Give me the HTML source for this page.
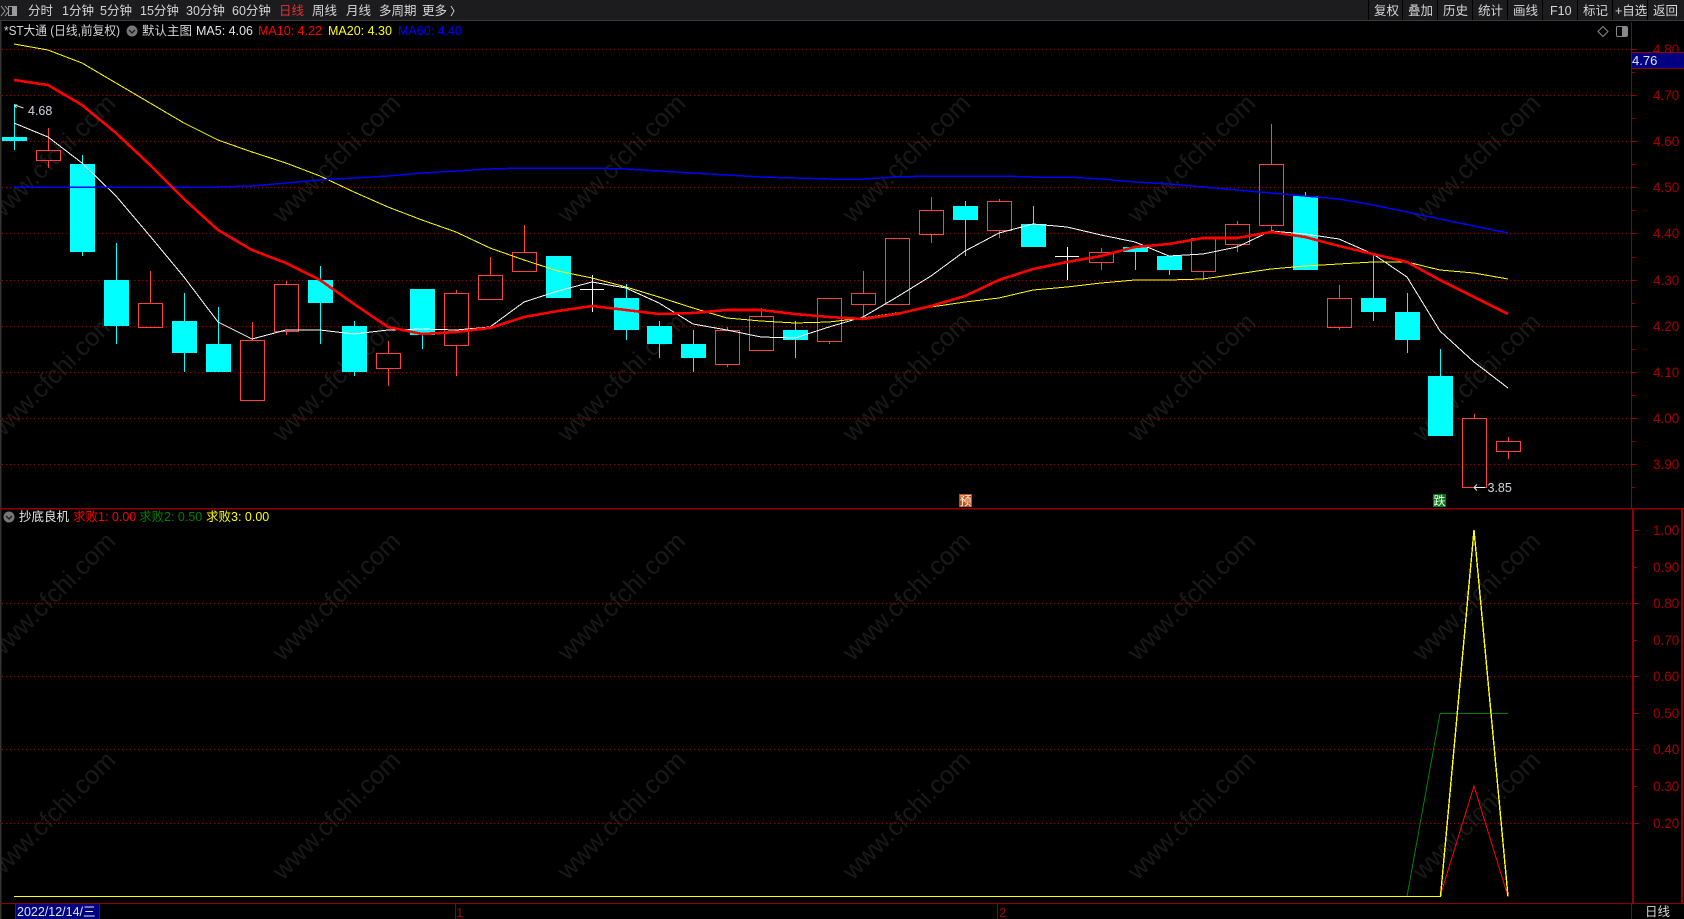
<!DOCTYPE html>
<html><head><meta charset="utf-8"><style>
html,body{margin:0;padding:0;background:#000;width:1684px;height:919px;overflow:hidden}
svg{display:block;position:absolute;left:0;top:0}
text{font-family:"Liberation Sans","Noto Sans CJK SC",sans-serif;font-size:12.5px}
.m{fill:#d6d6d6;font-size:12.5px}
.a{fill:#a80000;font-size:13.5px}
.w{fill:#191919;font-size:25.5px}
</style></head><body>
<svg width="1684" height="919" viewBox="0 0 1684 919" xmlns="http://www.w3.org/2000/svg">
<rect width="1684" height="919" fill="#000"/>
<!-- watermark -->
<g text-anchor="middle">
<text class="w" transform="translate(51,158) rotate(-45)" y="9">www.cfchi.com</text><text class="w" transform="translate(336,158) rotate(-45)" y="9">www.cfchi.com</text><text class="w" transform="translate(621,158) rotate(-45)" y="9">www.cfchi.com</text><text class="w" transform="translate(906,158) rotate(-45)" y="9">www.cfchi.com</text><text class="w" transform="translate(1191,158) rotate(-45)" y="9">www.cfchi.com</text><text class="w" transform="translate(1476,158) rotate(-45)" y="9">www.cfchi.com</text>
<text class="w" transform="translate(51,377) rotate(-45)" y="9">www.cfchi.com</text><text class="w" transform="translate(336,377) rotate(-45)" y="9">www.cfchi.com</text><text class="w" transform="translate(621,377) rotate(-45)" y="9">www.cfchi.com</text><text class="w" transform="translate(906,377) rotate(-45)" y="9">www.cfchi.com</text><text class="w" transform="translate(1191,377) rotate(-45)" y="9">www.cfchi.com</text><text class="w" transform="translate(1476,377) rotate(-45)" y="9">www.cfchi.com</text>
<text class="w" transform="translate(51,596) rotate(-45)" y="9">www.cfchi.com</text><text class="w" transform="translate(336,596) rotate(-45)" y="9">www.cfchi.com</text><text class="w" transform="translate(621,596) rotate(-45)" y="9">www.cfchi.com</text><text class="w" transform="translate(906,596) rotate(-45)" y="9">www.cfchi.com</text><text class="w" transform="translate(1191,596) rotate(-45)" y="9">www.cfchi.com</text><text class="w" transform="translate(1476,596) rotate(-45)" y="9">www.cfchi.com</text>
<text class="w" transform="translate(51,815) rotate(-45)" y="9">www.cfchi.com</text><text class="w" transform="translate(336,815) rotate(-45)" y="9">www.cfchi.com</text><text class="w" transform="translate(621,815) rotate(-45)" y="9">www.cfchi.com</text><text class="w" transform="translate(906,815) rotate(-45)" y="9">www.cfchi.com</text><text class="w" transform="translate(1191,815) rotate(-45)" y="9">www.cfchi.com</text><text class="w" transform="translate(1476,815) rotate(-45)" y="9">www.cfchi.com</text>
</g>
<!-- top bar -->
<rect x="0" y="0" width="1684" height="20" fill="#1c1c1f"/>
<rect x="0" y="20" width="1684" height="1" fill="#3a3a3a"/>
<rect x="0" y="21" width="1684" height="1" fill="#000"/>
<g fill="#000"><rect x="1368" y="0" width="1" height="20"/><rect x="1402" y="0" width="1" height="20"/><rect x="1437" y="0" width="1" height="20"/><rect x="1472" y="0" width="1" height="20"/><rect x="1507" y="0" width="1" height="20"/><rect x="1542" y="0" width="1" height="20"/><rect x="1577" y="0" width="1" height="20"/><rect x="1612" y="0" width="1" height="20"/><rect x="1647" y="0" width="1" height="20"/></g>
<rect x="0" y="21" width="1.5" height="898" fill="#333"/>
<!-- top-left icon -->
<path d="M1 6l4 5-4 5M5 6l4 5-4 5" fill="none" stroke="#9a9a9a" stroke-width="1"/>
<rect x="8.5" y="6.5" width="8" height="9" fill="none" stroke="#9a9a9a"/><rect x="12" y="7" width="4" height="8" fill="#9a9a9a"/>
<!-- menu -->
<g class="m">
<text class="m" x="28" y="15">分时</text><text class="m" x="62" y="15">1分钟</text><text class="m" x="100" y="15">5分钟</text><text class="m" x="140" y="15">15分钟</text><text class="m" x="186" y="15">30分钟</text><text class="m" x="232" y="15">60分钟</text>
<text class="m" x="279" y="15" style="fill:#e83030">日线</text>
<text class="m" x="312" y="15">周线</text><text class="m" x="346" y="15">月线</text><text class="m" x="379" y="15">多周期</text><text class="m" x="422" y="15">更多</text>
<path d="M451 6l3 5-3 5" fill="none" stroke="#c8c8c8"/>
<text class="m" x="1374" y="15">复权</text><text class="m" x="1408" y="15">叠加</text><text class="m" x="1443" y="15">历史</text><text class="m" x="1478" y="15">统计</text><text class="m" x="1513" y="15">画线</text><text class="m" x="1550" y="15">F10</text><text class="m" x="1583" y="15">标记</text><text class="m" x="1615" y="15">+自选</text><text class="m" x="1653" y="15">返回</text>
</g>
<!-- title row -->
<text class="m" x="4" y="35" textLength="116" lengthAdjust="spacingAndGlyphs">*ST大通 (日线,前复权)</text>
<circle cx="132" cy="31" r="5.5" fill="#777"/><path d="M129 30l3 3 3-3" fill="none" stroke="#1a1a1a" stroke-width="1.3"/>
<text class="m" x="142" y="35">默认主图</text>
<text x="196" y="35" fill="#e4e4e4">MA5: 4.06</text>
<text x="258" y="35" fill="#ff0000">MA10: 4.22</text>
<text x="328" y="35" fill="#ffff00">MA20: 4.30</text>
<text x="398" y="35" fill="#0000ff">MA60: 4.40</text>
<path d="M1603 26.5l5 5-5 5-5-5z" fill="none" stroke="#888"/>
<rect x="1616.5" y="26.5" width="11" height="10" rx="1.5" fill="none" stroke="#888"/><rect x="1622" y="27" width="5" height="9" fill="#888"/>
<!-- grid dotted -->
<g stroke="#a00000" stroke-dasharray="1 3" stroke-width="1" shape-rendering="crispEdges">
<path d="M2 49.5H1631M2 95.5H1631M2 141.5H1631M2 187.5H1631M2 233.5H1631M2 280.5H1631M2 326.5H1631M2 372.5H1631M2 418.5H1631M2 464.5H1631"/>
<path d="M2 603.5H1631M2 676.5H1631M2 749.5H1631M2 823.5H1631"/>
</g>
<!-- candles -->
<g shape-rendering="crispEdges">
<!-- hollow red -->
<g fill="none" stroke="#ff4040" stroke-width="1">
<rect x="36.5" y="150.5" width="24" height="10"/><rect x="138.5" y="303.5" width="24" height="24"/><rect x="240.5" y="340.5" width="24" height="60"/><rect x="274.5" y="284.5" width="24" height="47"/><rect x="376.5" y="353.5" width="24" height="15"/><rect x="444.5" y="293.5" width="24" height="52"/><rect x="478.5" y="275.5" width="24" height="24"/><rect x="512.5" y="252.5" width="24" height="19"/><rect x="715.5" y="330.5" width="24" height="34"/><rect x="749.5" y="316.5" width="24" height="34"/><rect x="817.5" y="298.5" width="24" height="43"/><rect x="851.5" y="293.5" width="24" height="11"/><rect x="885.5" y="238.5" width="24" height="66"/><rect x="919.5" y="210.5" width="24" height="24"/><rect x="987.5" y="201.5" width="24" height="29"/><rect x="1089.5" y="252.5" width="24" height="10"/><rect x="1191.5" y="238.5" width="24" height="33"/><rect x="1225.5" y="224.5" width="24" height="20"/><rect x="1259.5" y="164.5" width="24" height="61"/><rect x="1327.5" y="298.5" width="24" height="29"/><rect x="1462.5" y="418.5" width="24" height="69"/><rect x="1496.5" y="441.5" width="24" height="10"/>
<path d="M48.5 128V150M48.5 161V168M150.5 271V303M252.5 322V340M286.5 281V284M286.5 332V335M388.5 341V353M388.5 369V386M456.5 290V293M456.5 346V376M490.5 257V275M524.5 225V252M727.5 327V330M727.5 365V367M761.5 308V316M829.5 342V344M863.5 271V293M863.5 305V317M931.5 197V210M931.5 235V243M999.5 199V201M999.5 231V238M1101.5 248V252M1101.5 263V270M1203.5 272V280M1237.5 221V224M1237.5 245V252M1271.5 124V164M1271.5 226V233M1339.5 285V298M1339.5 328V330M1474.5 414V418M1508.5 437V441M1508.5 452V459"/>
</g>
<!-- cyan -->
<g stroke="#00ffff" stroke-width="1">
<path d="M14.5 104V150M82.5 155V256M116.5 243V344M184.5 293V372M218.5 307V344M320.5 266V344M354.5 321V376M422.5 335V349M626.5 284V340M659.5 321V358M693.5 330V372M795.5 321V358M965.5 201V256M1033.5 206V224M1135.5 252V270M1169.5 270V275M1305.5 192V196M1373.5 253V321M1407.5 293V353M1440.5 349V376"/>
</g>
<g fill="#00ffff">
<rect x="2" y="137" width="25" height="4"/><rect x="70" y="164" width="25" height="88"/><rect x="104" y="280" width="25" height="46"/><rect x="172" y="321" width="25" height="32"/><rect x="206" y="344" width="25" height="28"/><rect x="308" y="280" width="25" height="23"/><rect x="342" y="326" width="25" height="46"/><rect x="410" y="289" width="25" height="46"/><rect x="546" y="256" width="25" height="42"/><rect x="614" y="298" width="25" height="32"/><rect x="647" y="326" width="25" height="18"/><rect x="681" y="344" width="25" height="14"/><rect x="783" y="330" width="25" height="10"/><rect x="953" y="206" width="25" height="14"/><rect x="1021" y="224" width="25" height="23"/><rect x="1123" y="247" width="25" height="5"/><rect x="1157" y="256" width="25" height="14"/><rect x="1293" y="196" width="25" height="74"/><rect x="1361" y="298" width="25" height="14"/><rect x="1395" y="312" width="25" height="28"/><rect x="1428" y="376" width="25" height="60"/>
</g>
<!-- white doji -->
<path d="M580 289.5H604M592.5 275V312M1055 256.5H1079M1067.5 247V280" stroke="#fff" stroke-width="1" fill="none"/>
</g>
<!-- MA lines -->
<g fill="none" stroke-linejoin="round" shape-rendering="crispEdges">
<polyline stroke="#ffffff" stroke-width="1" points="14,123 48,137 82,163 116,196 150,236 184,277 218,322 252,339 286,330 320,330 354,334 388,330 422,329 456,330 490,327 524,302 558,291 592,282 626,288 659,303 693,324 727,330 761,337 795,338 829,327 863,317 897,297 931,276 965,251 999,233 1033,224 1067,227 1101,235 1135,242 1169,256 1203,254 1237,247 1271,231 1305,234 1339,239 1373,254 1407,277 1440,331 1474,362 1508,388"/>
<polyline stroke="#ffff00" stroke-width="1" points="14,44 48,50 82,63 116,83 150,103 184,123 218,140 252,152 286,163 320,176 354,192 388,207 422,220 456,232 490,248 524,260 558,271 592,278 626,287 659,297 693,308 727,318 761,321 795,323 829,322 863,318 897,313 931,307 965,302 999,298 1033,290 1067,287 1101,283 1135,280 1169,280 1203,279 1237,274 1271,269 1305,266 1339,264 1373,262 1407,262 1440,270 1474,273 1508,279"/>
<polyline stroke="#0000ff" stroke-width="1.5" points="14,187 218,187 252,186 286,183 320,180 354,178 388,176 422,173 456,171 490,169 524,168 558,168 592,168 626,169 659,171 693,173 727,175 761,177 795,178 829,179 863,179 897,177 931,176 965,176 999,176 1033,177 1067,177 1101,179 1135,182 1169,184 1203,187 1237,190 1271,193 1305,196 1339,199 1373,205 1407,212 1440,219 1474,226 1508,233"/>
<polyline stroke="#ff0000" stroke-width="2.6" points="14,80 48,85 82,105 116,133 150,165 184,199 218,230 252,250 286,263 320,280 354,304 388,327 422,334 456,332 490,328 524,317 558,311 592,306 626,310 659,314 693,313 727,310 761,310 795,314 829,317 863,319 897,314 931,306 965,296 999,280 1033,269 1067,262 1101,256 1135,247 1169,244 1203,238 1237,238 1271,232 1305,237 1339,246 1373,254 1407,262 1440,280 1474,297 1508,314"/>
</g>
<!-- price labels -->
<path d="M14.5 105l9 3M14.5 105l3 0M14.5 105l2 3" stroke="#ddd" fill="none"/>
<text x="28" y="115" fill="#d0d8e0" font-size="12.5">4.68</text>
<path d="M1474 487.5h11M1474 487.5l3-3M1474 487.5l3 3" stroke="#eee" fill="none"/>
<text x="1487.5" y="492" fill="#d0d8e0">3.85</text>
<!-- markers -->
<rect x="959" y="494" width="13" height="13" fill="#c04a10"/><text x="959.5" y="505" fill="#fff" font-size="12" style="font-size:12px">预</text>
<rect x="1433" y="494" width="13" height="13" fill="#007a10"/><text x="1433.5" y="505" fill="#fff" style="font-size:12px">跌</text>
<!-- axes -->
<g shape-rendering="crispEdges">
<rect x="0" y="508" width="1684" height="1.5" fill="#900000"/>
<rect x="1631" y="22" width="1" height="487" fill="#900000"/>
<rect x="1632" y="509" width="2" height="395" fill="#900000"/>
<rect x="1681" y="509" width="2" height="395" fill="#900000"/>
<rect x="0" y="903" width="1684" height="1" fill="#900000"/>
<rect x="1631" y="904" width="1" height="15" fill="#900000"/>
<path d="M1632 49.5h5M1632 95.5h5M1632 141.5h5M1632 187.5h5M1632 233.5h5M1632 280.5h5M1632 326.5h5M1632 372.5h5M1632 418.5h5M1632 464.5h5M1632 72.5h3M1632 118.5h3M1632 164.5h3M1632 210.5h3M1632 257.5h3M1632 303.5h3M1632 349.5h3M1632 395.5h3M1632 441.5h3M1632 487.5h3" stroke="#900000" fill="none"/>
<path d="M1634 530.5h5M1634 567.5h3M1634 603.5h5M1634 640.5h3M1634 676.5h5M1634 713.5h5M1634 749.5h5M1634 786.5h3M1634 823.5h5" stroke="#900000" fill="none"/>
</g>
<!-- axis labels -->
<g>
<text class="a" x="1653" y="54">4.80</text>
<text class="a" x="1653" y="100">4.70</text><text class="a" x="1653" y="146">4.60</text><text class="a" x="1653" y="192">4.50</text><text class="a" x="1653" y="238">4.40</text><text class="a" x="1653" y="285">4.30</text><text class="a" x="1653" y="331">4.20</text><text class="a" x="1653" y="377">4.10</text><text class="a" x="1653" y="423">4.00</text><text class="a" x="1653" y="469">3.90</text>
<text class="a" x="1653" y="535">1.00</text><text class="a" x="1653" y="572">0.90</text><text class="a" x="1653" y="608">0.80</text><text class="a" x="1653" y="645">0.70</text><text class="a" x="1653" y="681">0.60</text><text class="a" x="1653" y="718">0.50</text><text class="a" x="1653" y="754">0.40</text><text class="a" x="1653" y="791">0.30</text><text class="a" x="1653" y="828">0.20</text>
</g>
<rect x="1632" y="52" width="52" height="17" fill="#000080"/>
<rect x="1632" y="52" width="52" height="1" fill="#900000"/><rect x="1632" y="68" width="52" height="1" fill="#900000"/>
<text x="1632" y="65" fill="#dfe6f5" style="font-size:13px">4.76</text>
<!-- lower panel title -->
<circle cx="9" cy="517" r="5.5" fill="#777"/><path d="M6 516l3 3 3-3" fill="none" stroke="#1a1a1a" stroke-width="1.3"/>
<text class="m" x="19" y="521" style="fill:#e8e8e8">抄底良机</text>
<text x="73" y="521" fill="#ff0000">求败1: 0.00</text>
<text x="139" y="521" fill="#008000">求败2: 0.50</text>
<text x="206" y="521" fill="#ffff00">求败3: 0.00</text>
<!-- lower lines -->
<g fill="none" stroke-width="1" shape-rendering="crispEdges">
<polyline stroke="#008000" points="1407,896.5 1440,713.5 1508,713.5"/>
<polyline stroke="#ff0000" points="1440,896.5 1474,786 1508,896.5"/>
<polyline stroke="#ffff00" stroke-width="1.4" points="1440.5,896.5 1474,530 1508,896.5"/>
<path stroke="#ffff00" stroke-width="1" d="M14 896.5H1441"/>
</g>
<!-- time axis -->
<rect x="16" y="904" width="83" height="15" fill="#000080"/>
<path d="M15.5 904V919M99.5 904V919M455.5 904V919M997.5 904V919" stroke="#900000" fill="none"/>
<text x="17" y="916" fill="#dfe6f5" style="font-size:12.5px">2022/12/14/三</text>
<text x="456" y="917" fill="#a80000" style="font-size:13px">1</text>
<text x="999" y="917" fill="#a80000" style="font-size:13px">2</text>
<text x="1645" y="916" fill="#d6d6d6" style="font-size:12.5px">日线</text>
</svg>
</body></html>
